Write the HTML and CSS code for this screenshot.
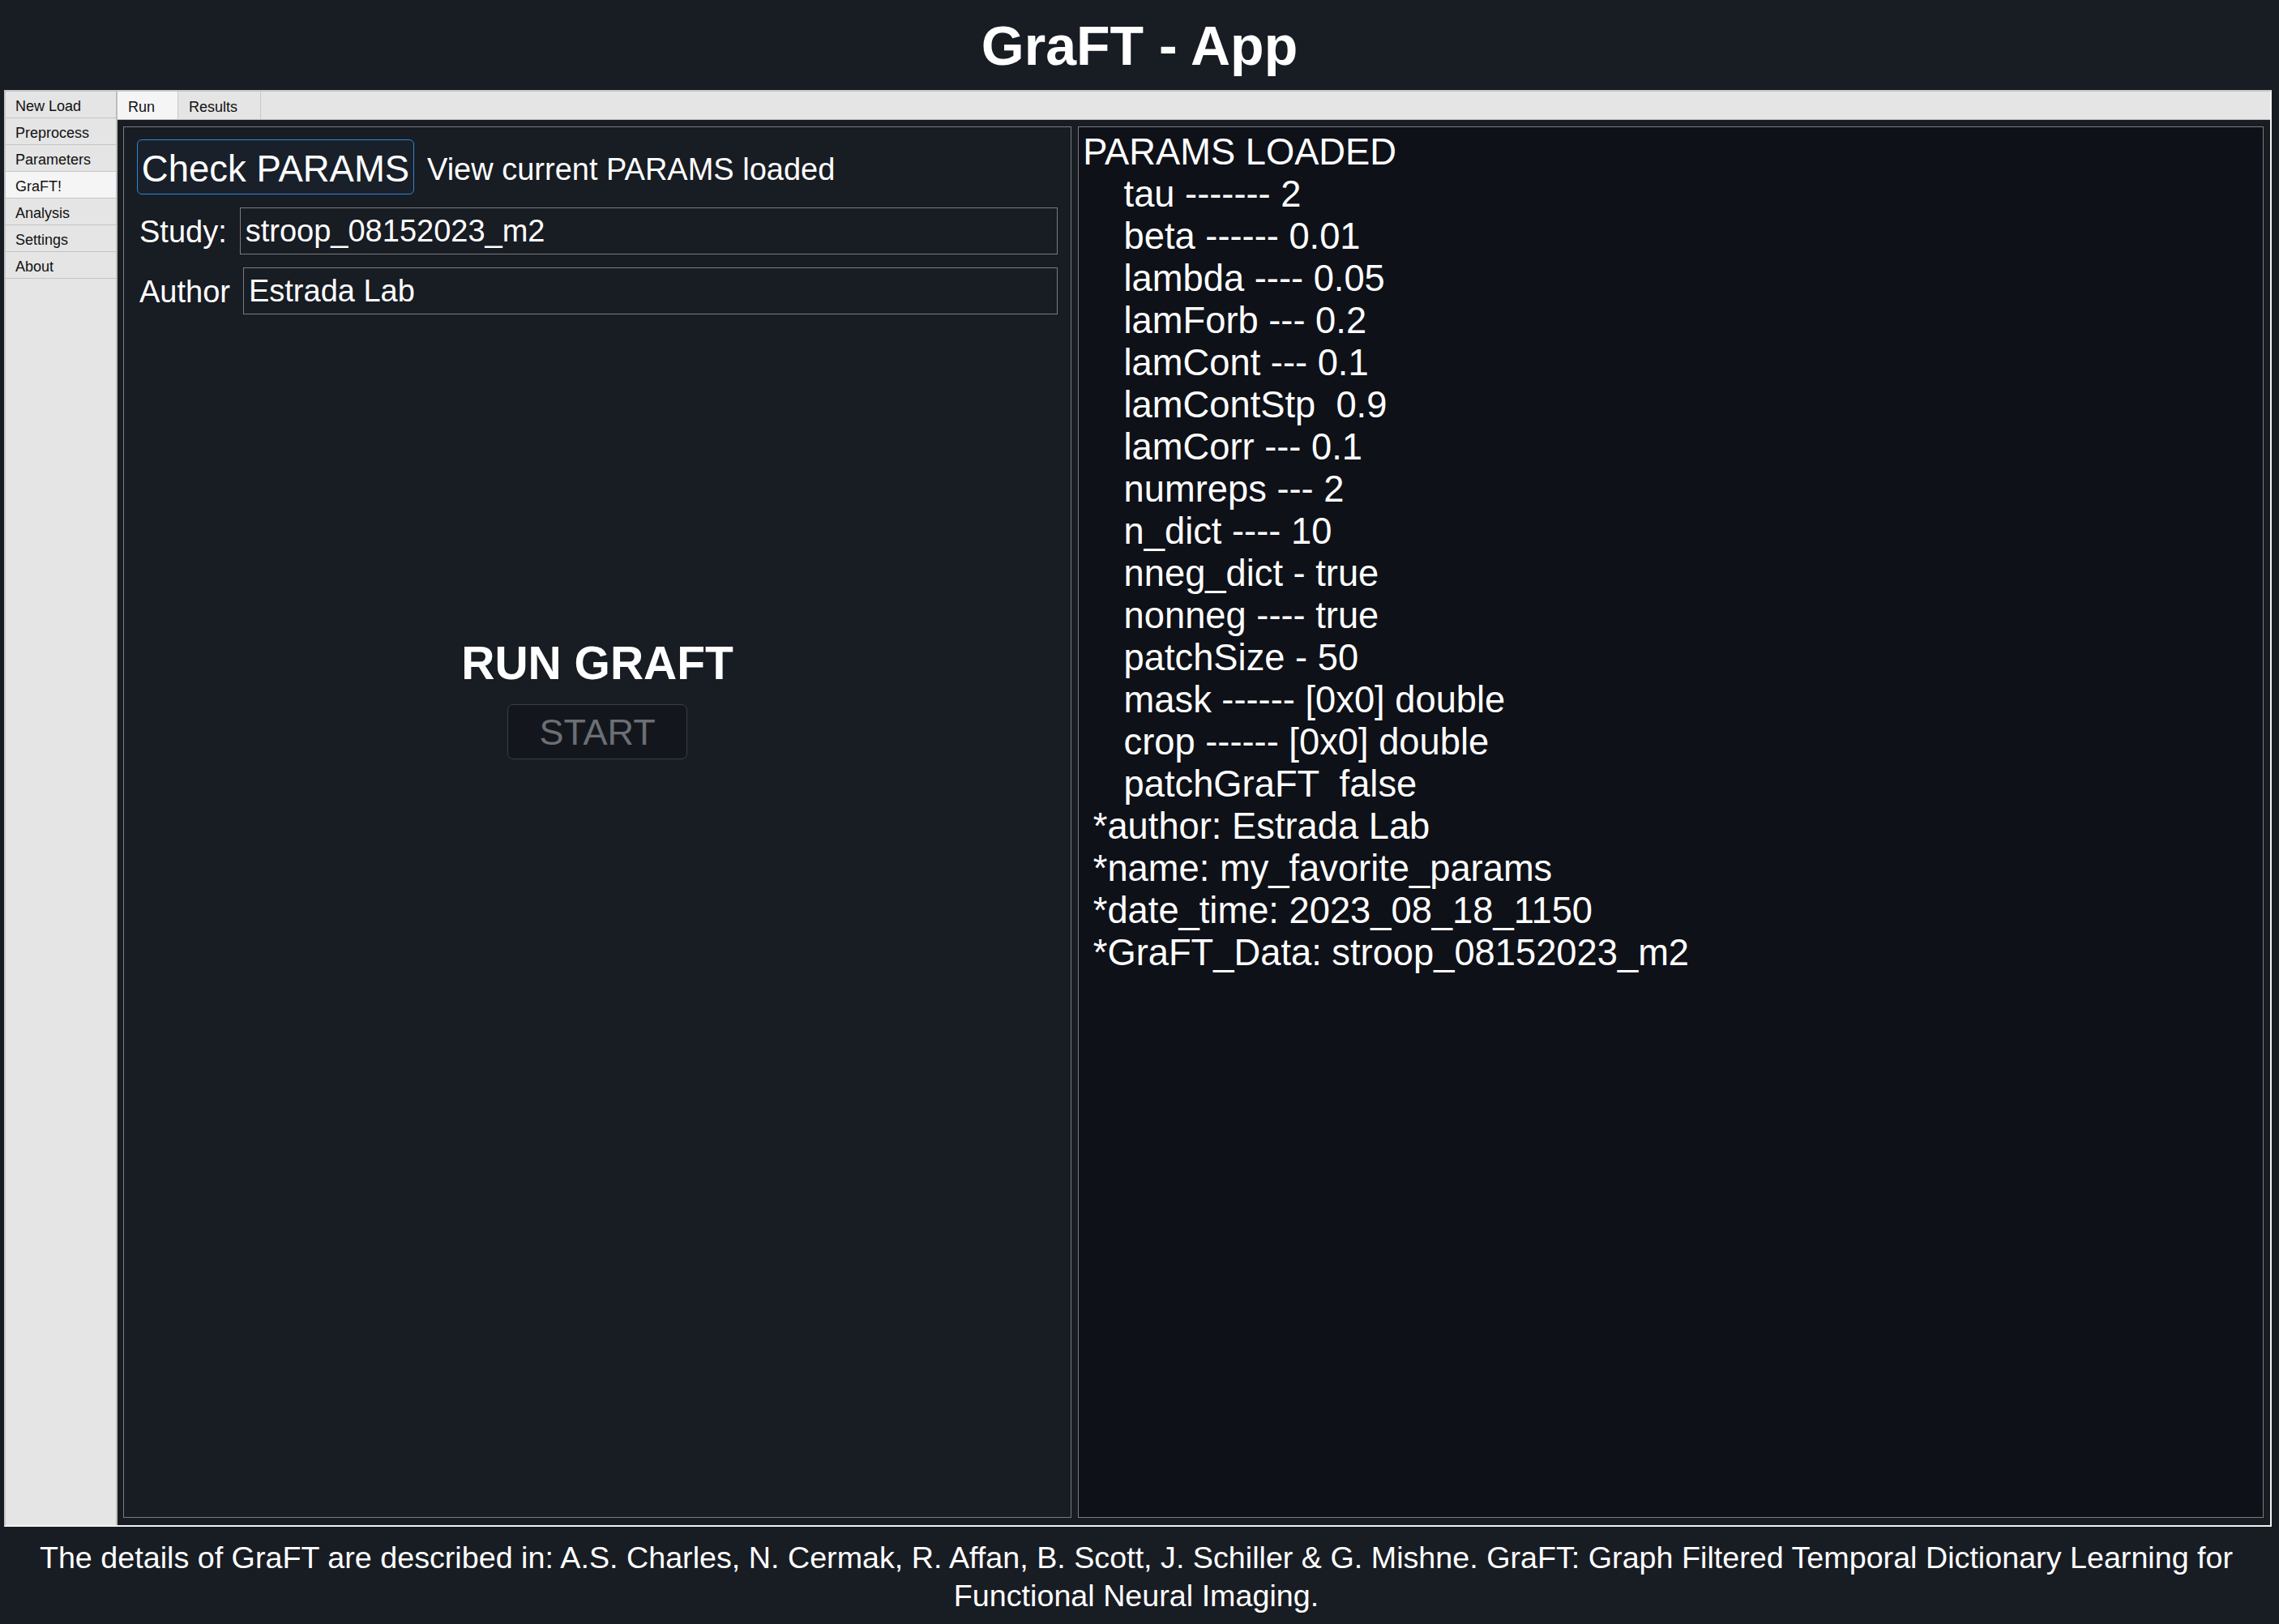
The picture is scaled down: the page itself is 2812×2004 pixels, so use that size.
FILE: index.html
```html
<!DOCTYPE html>
<html lang="en">
<head>
<meta charset="utf-8">
<title>GraFT - App</title>
<link rel="stylesheet" href="styles.css">
</head>
<body>
<header class="app-header"><h1 class="app-title">GraFT - App</h1></header>
<main class="frame">
  <nav class="sidebar">
    <div class="side-item">New Load</div>
    <div class="side-item">Preprocess</div>
    <div class="side-item">Parameters</div>
    <div class="side-item active">GraFT!</div>
    <div class="side-item">Analysis</div>
    <div class="side-item">Settings</div>
    <div class="side-item">About</div>
  </nav>
  <section class="tabgroup">
    <div class="tabbar">
      <div class="tab active">Run</div>
      <div class="tab">Results</div>
    </div>
    <div class="tabcontent">
      <div class="panel run-panel">
        <div class="check-row">
          <button class="check-btn">Check PARAMS</button>
          <span class="check-label">View current PARAMS loaded</span>
        </div>
        <div class="field-row">
          <label class="field-label">Study:</label>
          <input class="field-input" type="text" value="stroop_08152023_m2">
        </div>
        <div class="field-row">
          <label class="field-label">Author</label>
          <input class="field-input" type="text" value="Estrada Lab">
        </div>
        <div class="run-block">
          <div class="run-title">RUN GRAFT</div>
          <button class="start-btn" disabled>START</button>
        </div>
      </div>
      <div class="panel params-panel">
<pre class="params-text">PARAMS LOADED
    tau ------- 2
    beta ------ 0.01
    lambda ---- 0.05
    lamForb --- 0.2
    lamCont --- 0.1
    lamContStp  0.9
    lamCorr --- 0.1
    numreps --- 2
    n_dict ---- 10
    nneg_dict - true
    nonneg ---- true
    patchSize - 50
    mask ------ [0x0] double
    crop ------ [0x0] double
    patchGraFT  false
 *author: Estrada Lab
 *name: my_favorite_params
 *date_time: 2023_08_18_1150
 *GraFT_Data: stroop_08152023_m2</pre>
      </div>
    </div>
  </section>
</main>
<footer class="app-footer">The details of GraFT are described in: A.S. Charles, N. Cermak, R. Affan, B. Scott, J. Schiller &amp; G. Mishne. GraFT: Graph Filtered Temporal Dictionary Learning for Functional Neural Imaging.</footer>
</body>
</html>
```
FILE: styles.css
```css
* { box-sizing: border-box; }
html, body {
  margin: 0;
  padding: 0;
  background: #181c23;
  font-family: "Liberation Sans", Arial, sans-serif;
  color: #ffffff;
}
body {
  width: 2812px;
  height: 2004px;
  overflow: hidden;
}
.app-header {
  height: 111px;
  padding-top: 17px;
  text-align: center;
}
.app-title {
  margin: 0;
  font-size: 68px;
  font-weight: bold;
  line-height: 79px;
}
.frame {
  display: flex;
  margin-left: 5px;
  width: 2798px;
  height: 1773px;
  background: #e5e5e5;
  border-top: 2px solid #c6c6c6;
  border-left: 2px solid #c6c6c6;
  border-right: 2px solid #f2f2f2;
  border-bottom: 2px solid #f2f2f2;
}
.sidebar {
  width: 138px;
  flex: none;
  background: #e5e5e5;
  border-right: 2px solid #bdbdbd;
}
.side-item {
  height: 33px;
  line-height: 32px;
  padding: 2px 0 0 12px;
  font-size: 18px;
  color: #111;
  border-bottom: 1px solid #c4c4c4;
}
.side-item.active { background: #f5f5f5; }
.tabgroup {
  flex: 1;
  display: flex;
  flex-direction: column;
  min-width: 0;
}
.tabbar {
  height: 35px;
  flex: none;
  display: flex;
  background: #e5e5e5;
  border-bottom: 1px solid #bdbdbd;
}
.tab {
  height: 34px;
  line-height: 34px;
  padding: 2px 28px 0 13px;
  font-size: 18px;
  color: #111;
  border-right: 1px solid #c8c8c8;
}
.tab.active { background: #f5f5f5; }
.tabcontent {
  flex: 1;
  display: grid;
  grid-template-columns: 4fr 5fr;
  gap: 8px;
  padding: 8px 8px 9px 7px;
  background: #181c23;
}
.panel {
  border: 1px solid #7b7b7b;
  min-height: 0;
}
.run-panel {
  display: flex;
  flex-direction: column;
  padding: 15px 16px;
}
.check-row {
  display: flex;
  align-items: center;
  gap: 16px;
}
.check-btn {
  height: 68px;
  width: 342px;
  padding: 6px 0 0;
  font-family: "Liberation Sans", Arial, sans-serif;
  font-size: 45.5px;
  color: #ffffff;
  background: #19202a;
  border: 1.5px solid #2f86d8;
  border-radius: 6px;
}
.check-label {
  padding-top: 6px;
  font-size: 38px;
}
.field-row {
  display: flex;
  align-items: center;
  gap: 16px;
  margin-top: 16px;
}
.field-label {
  padding: 2px 0 0 3px;
  font-size: 38px;
  white-space: nowrap;
}
.field-input {
  flex: 1;
  min-width: 0;
  height: 58px;
  padding: 0 6px;
  font-family: "Liberation Sans", Arial, sans-serif;
  font-size: 38px;
  color: #ffffff;
  background: transparent;
  border: 1px solid #7b7b7b;
  outline: none;
}
.run-block {
  margin-top: 397px;
  display: flex;
  flex-direction: column;
  align-items: center;
}
.run-title {
  font-size: 57px;
  font-weight: bold;
  line-height: 67px;
}
.start-btn {
  margin-top: 17px;
  width: 222px;
  height: 68px;
  padding: 2px 0 0;
  font-family: "Liberation Sans", Arial, sans-serif;
  font-size: 45px;
  color: #6c6f74;
  background: #13171d;
  border: 1px solid #3a3e45;
  border-radius: 7px;
}
.params-panel {
  background: #0e1118;
  padding: 5px 5px;
  overflow: hidden;
}
.params-text {
  margin: 0;
  font-family: "Liberation Sans", Arial, sans-serif;
  font-size: 45.3px;
  line-height: 52px;
  color: #ffffff;
  white-space: pre;
}
.app-footer {
  padding: 15px 24px 0 16px;
  text-align: center;
  font-size: 37.7px;
  line-height: 47px;
}
```
